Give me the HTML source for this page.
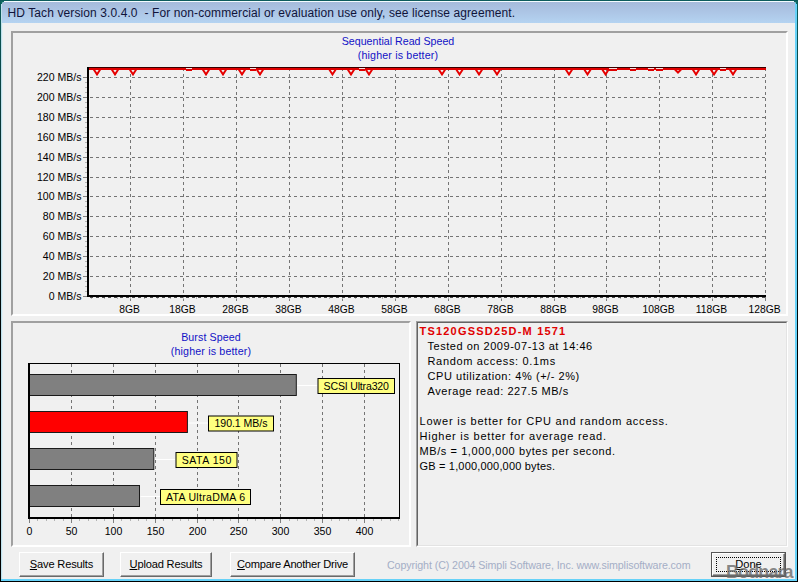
<!DOCTYPE html>
<html lang="en"><head><meta charset="utf-8"><title>HD Tach</title>
<style>
html,body{margin:0;padding:0}
body{width:798px;height:582px;overflow:hidden;position:relative;background:#f0f0f0;font-family:"Liberation Sans",sans-serif;font-size:10.67px;color:#000}
.abs{position:absolute}
#frame{left:0;top:0;width:798px;height:582px;box-sizing:border-box;background:linear-gradient(#0d5c5c,#062a2a 30%,#000 60%)}
#inner{left:1px;top:1px;width:796px;height:580px;background:#66d2f8}
#client{left:1px;top:1px;width:794px;height:578px;background:#f0f0f0;border-left:1px solid #bfe1ec;border-top:1px solid #f4fcff;box-sizing:border-box}
#title{left:2px;top:2px;width:793px;height:21px;background:linear-gradient(#a6bbdb,#adc6e6 50%,#b4d3f1);}
#title span{position:absolute;left:5.5px;top:4px;font-size:12px;letter-spacing:0.1px;color:#10143a;white-space:pre}
.panel{box-sizing:border-box;border:2px solid;border-color:#a0a0a0 #fff #fff #a0a0a0}
svg{position:absolute;left:0;top:0}
svg text.l{font-family:"Liberation Sans",sans-serif;font-size:10.55px;fill:#000}
svg .g{stroke:#747474;stroke-width:1;stroke-dasharray:3 3;fill:none}
svg .t{stroke:#808080;stroke-width:1}
svg .m{stroke:#b4b4b4;stroke-width:1}
.ct{color:#1212c6;text-align:center;font-size:10.67px;line-height:14px;white-space:nowrap}
.btn{box-sizing:border-box;height:25px;background:#f0f0f0;border:1px solid;border-color:#fff #696969 #696969 #fff;box-shadow:inset -1px -1px 0 #a0a0a0;font-size:11.1px;letter-spacing:-0.17px;text-align:center;line-height:22px;white-space:nowrap}
.btn u{text-decoration:underline}
#info2{position:absolute;left:0;top:0;right:0;bottom:0;border:1px solid;border-color:#646464 #e3e3e3 #e3e3e3 #646464}
#info p{margin:0;position:absolute;white-space:pre;font-size:11px;line-height:15px;height:15px}
</style></head><body>
<div id="frame" class="abs"></div>
<div id="inner" class="abs"></div>
<div id="client" class="abs"></div>
<div class="abs" style="left:2px;top:23px;width:1px;height:556px;background:#e2f0f5"></div>
<div id="title" class="abs"><span>HD Tach version 3.0.4.0  - For non-commercial or evaluation use only, see license agreement.</span></div>
<div class="abs" style="left:1px;top:1px;width:3px;height:1px;background:#0f6a62"></div>
<div class="abs" style="left:1px;top:2px;width:1px;height:2px;background:#0f6a62"></div>
<div class="abs" style="left:2px;top:2px;width:1px;height:1px;background:#6aa8a8"></div>
<div class="abs" style="left:794px;top:1px;width:3px;height:1px;background:#0f6a62"></div>
<div class="abs" style="left:796px;top:2px;width:1px;height:2px;background:#0f6a62"></div>
<div class="abs" style="left:795px;top:2px;width:1px;height:1px;background:#6aa8a8"></div>

<div class="abs panel" style="left:11px;top:31px;width:777px;height:285px"></div>
<div class="abs panel" style="left:11px;top:321px;width:400px;height:226px"></div>
<div class="abs" id="info" style="left:416px;top:321px;width:372px;height:226px;box-sizing:border-box;border:1px solid;border-color:#a0a0a0 #fff #fff #a0a0a0">
<div id="info2">
<p style="left:1.5px;top:1px;letter-spacing:1.2px;color:#e00000;font-weight:bold">TS120GSSD25D-M 1571</p>
<p style="left:9.5px;top:16px;letter-spacing:0.53px">Tested on 2009-07-13 at 14:46</p>
<p style="left:9.5px;top:31px;letter-spacing:0.67px">Random access: 0.1ms</p>
<p style="left:9.5px;top:46px;letter-spacing:0.56px">CPU utilization: 4% (+/- 2%)</p>
<p style="left:9.5px;top:61px;letter-spacing:0.57px">Average read: 227.5 MB/s</p>
<p style="left:1.5px;top:91px;letter-spacing:0.78px">Lower is better for CPU and random access.</p>
<p style="left:1.5px;top:106px;letter-spacing:0.76px">Higher is better for average read.</p>
<p style="left:1.5px;top:121px;letter-spacing:0.58px">MB/s = 1,000,000 bytes per second.</p>
<p style="left:1.5px;top:136px;letter-spacing:0.18px">GB = 1,000,000,000 bytes.</p>
</div></div>

<div class="abs ct" style="left:298px;top:34px;width:200px">Sequential Read Speed<br><span style="letter-spacing:.16px">(higher is better)</span></div>
<div class="abs ct" style="left:111px;top:330px;width:200px"><span style="letter-spacing:.1px">Burst Speed</span><br><span style="letter-spacing:.16px">(higher is better)</span></div>

<svg width="798" height="582" viewBox="0 0 798 582">
<line x1="83" y1="296.5" x2="87" y2="296.5" class="t"/>
<text x="81.5" y="300.1" class="l" text-anchor="end">0 MB/s</text>
<line x1="85" y1="291.5" x2="87" y2="291.5" class="m"/>
<line x1="85" y1="286.5" x2="87" y2="286.5" class="m"/>
<line x1="85" y1="281.5" x2="87" y2="281.5" class="m"/>
<line x1="90" y1="276.5" x2="765" y2="276.5" class="g"/>
<line x1="83" y1="276.5" x2="87" y2="276.5" class="t"/>
<text x="81.5" y="280.1" class="l" text-anchor="end">20 MB/s</text>
<line x1="85" y1="271.5" x2="87" y2="271.5" class="m"/>
<line x1="85" y1="266.5" x2="87" y2="266.5" class="m"/>
<line x1="85" y1="261.5" x2="87" y2="261.5" class="m"/>
<line x1="90" y1="256.5" x2="765" y2="256.5" class="g"/>
<line x1="83" y1="256.5" x2="87" y2="256.5" class="t"/>
<text x="81.5" y="260.1" class="l" text-anchor="end">40 MB/s</text>
<line x1="85" y1="251.5" x2="87" y2="251.5" class="m"/>
<line x1="85" y1="246.5" x2="87" y2="246.5" class="m"/>
<line x1="85" y1="241.5" x2="87" y2="241.5" class="m"/>
<line x1="90" y1="236.5" x2="765" y2="236.5" class="g"/>
<line x1="83" y1="236.5" x2="87" y2="236.5" class="t"/>
<text x="81.5" y="240.1" class="l" text-anchor="end">60 MB/s</text>
<line x1="85" y1="231.5" x2="87" y2="231.5" class="m"/>
<line x1="85" y1="226.5" x2="87" y2="226.5" class="m"/>
<line x1="85" y1="221.5" x2="87" y2="221.5" class="m"/>
<line x1="90" y1="216.5" x2="765" y2="216.5" class="g"/>
<line x1="83" y1="216.5" x2="87" y2="216.5" class="t"/>
<text x="81.5" y="220.1" class="l" text-anchor="end">80 MB/s</text>
<line x1="85" y1="211.5" x2="87" y2="211.5" class="m"/>
<line x1="85" y1="206.5" x2="87" y2="206.5" class="m"/>
<line x1="85" y1="201.5" x2="87" y2="201.5" class="m"/>
<line x1="90" y1="196.5" x2="765" y2="196.5" class="g"/>
<line x1="83" y1="196.5" x2="87" y2="196.5" class="t"/>
<text x="81.5" y="200.1" class="l" text-anchor="end">100 MB/s</text>
<line x1="85" y1="191.5" x2="87" y2="191.5" class="m"/>
<line x1="85" y1="186.5" x2="87" y2="186.5" class="m"/>
<line x1="85" y1="182.5" x2="87" y2="182.5" class="m"/>
<line x1="90" y1="177.5" x2="765" y2="177.5" class="g"/>
<line x1="83" y1="177.5" x2="87" y2="177.5" class="t"/>
<text x="81.5" y="181.1" class="l" text-anchor="end">120 MB/s</text>
<line x1="85" y1="172.5" x2="87" y2="172.5" class="m"/>
<line x1="85" y1="167.5" x2="87" y2="167.5" class="m"/>
<line x1="85" y1="162.5" x2="87" y2="162.5" class="m"/>
<line x1="90" y1="157.5" x2="765" y2="157.5" class="g"/>
<line x1="83" y1="157.5" x2="87" y2="157.5" class="t"/>
<text x="81.5" y="161.1" class="l" text-anchor="end">140 MB/s</text>
<line x1="85" y1="152.5" x2="87" y2="152.5" class="m"/>
<line x1="85" y1="147.5" x2="87" y2="147.5" class="m"/>
<line x1="85" y1="142.5" x2="87" y2="142.5" class="m"/>
<line x1="90" y1="137.5" x2="765" y2="137.5" class="g"/>
<line x1="83" y1="137.5" x2="87" y2="137.5" class="t"/>
<text x="81.5" y="141.1" class="l" text-anchor="end">160 MB/s</text>
<line x1="85" y1="132.5" x2="87" y2="132.5" class="m"/>
<line x1="85" y1="127.5" x2="87" y2="127.5" class="m"/>
<line x1="85" y1="122.5" x2="87" y2="122.5" class="m"/>
<line x1="90" y1="117.5" x2="765" y2="117.5" class="g"/>
<line x1="83" y1="117.5" x2="87" y2="117.5" class="t"/>
<text x="81.5" y="121.1" class="l" text-anchor="end">180 MB/s</text>
<line x1="85" y1="112.5" x2="87" y2="112.5" class="m"/>
<line x1="85" y1="107.5" x2="87" y2="107.5" class="m"/>
<line x1="85" y1="102.5" x2="87" y2="102.5" class="m"/>
<line x1="90" y1="97.5" x2="765" y2="97.5" class="g"/>
<line x1="83" y1="97.5" x2="87" y2="97.5" class="t"/>
<text x="81.5" y="101.1" class="l" text-anchor="end">200 MB/s</text>
<line x1="85" y1="92.5" x2="87" y2="92.5" class="m"/>
<line x1="85" y1="87.5" x2="87" y2="87.5" class="m"/>
<line x1="85" y1="82.5" x2="87" y2="82.5" class="m"/>
<line x1="90" y1="77.5" x2="765" y2="77.5" class="g"/>
<line x1="83" y1="77.5" x2="87" y2="77.5" class="t"/>
<text x="81.5" y="81.1" class="l" text-anchor="end">220 MB/s</text>
<line x1="130.5" y1="68" x2="130.5" y2="295" class="g"/>
<line x1="130.5" y1="297" x2="130.5" y2="301" class="t"/>
<text x="129.5" y="312.5" class="l" style="font-size:10.3px" text-anchor="middle">8GB</text>
<line x1="183.5" y1="68" x2="183.5" y2="295" class="g"/>
<line x1="183.5" y1="297" x2="183.5" y2="301" class="t"/>
<text x="182.5" y="312.5" class="l" style="font-size:10.3px" text-anchor="middle">18GB</text>
<line x1="236.5" y1="68" x2="236.5" y2="295" class="g"/>
<line x1="236.5" y1="297" x2="236.5" y2="301" class="t"/>
<text x="235.5" y="312.5" class="l" style="font-size:10.3px" text-anchor="middle">28GB</text>
<line x1="289.5" y1="68" x2="289.5" y2="295" class="g"/>
<line x1="289.5" y1="297" x2="289.5" y2="301" class="t"/>
<text x="288.5" y="312.5" class="l" style="font-size:10.3px" text-anchor="middle">38GB</text>
<line x1="342.5" y1="68" x2="342.5" y2="295" class="g"/>
<line x1="342.5" y1="297" x2="342.5" y2="301" class="t"/>
<text x="341.5" y="312.5" class="l" style="font-size:10.3px" text-anchor="middle">48GB</text>
<line x1="395.5" y1="68" x2="395.5" y2="295" class="g"/>
<line x1="395.5" y1="297" x2="395.5" y2="301" class="t"/>
<text x="394.5" y="312.5" class="l" style="font-size:10.3px" text-anchor="middle">58GB</text>
<line x1="448.5" y1="68" x2="448.5" y2="295" class="g"/>
<line x1="448.5" y1="297" x2="448.5" y2="301" class="t"/>
<text x="447.5" y="312.5" class="l" style="font-size:10.3px" text-anchor="middle">68GB</text>
<line x1="501.5" y1="68" x2="501.5" y2="295" class="g"/>
<line x1="501.5" y1="297" x2="501.5" y2="301" class="t"/>
<text x="500.5" y="312.5" class="l" style="font-size:10.3px" text-anchor="middle">78GB</text>
<line x1="554.5" y1="68" x2="554.5" y2="295" class="g"/>
<line x1="554.5" y1="297" x2="554.5" y2="301" class="t"/>
<text x="553.5" y="312.5" class="l" style="font-size:10.3px" text-anchor="middle">88GB</text>
<line x1="606.5" y1="68" x2="606.5" y2="295" class="g"/>
<line x1="606.5" y1="297" x2="606.5" y2="301" class="t"/>
<text x="605.5" y="312.5" class="l" style="font-size:10.3px" text-anchor="middle">98GB</text>
<line x1="659.5" y1="68" x2="659.5" y2="295" class="g"/>
<line x1="659.5" y1="297" x2="659.5" y2="301" class="t"/>
<text x="658.5" y="312.5" class="l" style="font-size:10.3px" text-anchor="middle">108GB</text>
<line x1="712.5" y1="68" x2="712.5" y2="295" class="g"/>
<line x1="712.5" y1="297" x2="712.5" y2="301" class="t"/>
<text x="711.5" y="312.5" class="l" style="font-size:10.3px" text-anchor="middle">118GB</text>
<line x1="765.5" y1="68" x2="765.5" y2="295" class="g"/>
<line x1="765.5" y1="297" x2="765.5" y2="301" class="t"/>
<text x="764.5" y="312.5" class="l" style="font-size:10.3px" text-anchor="middle">128GB</text>
<line x1="91.5" y1="297" x2="91.5" y2="299" class="m"/>
<line x1="104.5" y1="297" x2="104.5" y2="299" class="m"/>
<line x1="117.5" y1="297" x2="117.5" y2="299" class="m"/>
<line x1="130.5" y1="297" x2="130.5" y2="299" class="m"/>
<line x1="144.5" y1="297" x2="144.5" y2="299" class="m"/>
<line x1="157.5" y1="297" x2="157.5" y2="299" class="m"/>
<line x1="170.5" y1="297" x2="170.5" y2="299" class="m"/>
<line x1="183.5" y1="297" x2="183.5" y2="299" class="m"/>
<line x1="196.5" y1="297" x2="196.5" y2="299" class="m"/>
<line x1="210.5" y1="297" x2="210.5" y2="299" class="m"/>
<line x1="223.5" y1="297" x2="223.5" y2="299" class="m"/>
<line x1="236.5" y1="297" x2="236.5" y2="299" class="m"/>
<line x1="249.5" y1="297" x2="249.5" y2="299" class="m"/>
<line x1="263.5" y1="297" x2="263.5" y2="299" class="m"/>
<line x1="276.5" y1="297" x2="276.5" y2="299" class="m"/>
<line x1="289.5" y1="297" x2="289.5" y2="299" class="m"/>
<line x1="302.5" y1="297" x2="302.5" y2="299" class="m"/>
<line x1="315.5" y1="297" x2="315.5" y2="299" class="m"/>
<line x1="329.5" y1="297" x2="329.5" y2="299" class="m"/>
<line x1="342.5" y1="297" x2="342.5" y2="299" class="m"/>
<line x1="355.5" y1="297" x2="355.5" y2="299" class="m"/>
<line x1="368.5" y1="297" x2="368.5" y2="299" class="m"/>
<line x1="382.5" y1="297" x2="382.5" y2="299" class="m"/>
<line x1="395.5" y1="297" x2="395.5" y2="299" class="m"/>
<line x1="408.5" y1="297" x2="408.5" y2="299" class="m"/>
<line x1="421.5" y1="297" x2="421.5" y2="299" class="m"/>
<line x1="434.5" y1="297" x2="434.5" y2="299" class="m"/>
<line x1="448.5" y1="297" x2="448.5" y2="299" class="m"/>
<line x1="461.5" y1="297" x2="461.5" y2="299" class="m"/>
<line x1="474.5" y1="297" x2="474.5" y2="299" class="m"/>
<line x1="487.5" y1="297" x2="487.5" y2="299" class="m"/>
<line x1="501.5" y1="297" x2="501.5" y2="299" class="m"/>
<line x1="514.5" y1="297" x2="514.5" y2="299" class="m"/>
<line x1="527.5" y1="297" x2="527.5" y2="299" class="m"/>
<line x1="540.5" y1="297" x2="540.5" y2="299" class="m"/>
<line x1="554.5" y1="297" x2="554.5" y2="299" class="m"/>
<line x1="567.5" y1="297" x2="567.5" y2="299" class="m"/>
<line x1="580.5" y1="297" x2="580.5" y2="299" class="m"/>
<line x1="593.5" y1="297" x2="593.5" y2="299" class="m"/>
<line x1="606.5" y1="297" x2="606.5" y2="299" class="m"/>
<line x1="620.5" y1="297" x2="620.5" y2="299" class="m"/>
<line x1="633.5" y1="297" x2="633.5" y2="299" class="m"/>
<line x1="646.5" y1="297" x2="646.5" y2="299" class="m"/>
<line x1="659.5" y1="297" x2="659.5" y2="299" class="m"/>
<line x1="673.5" y1="297" x2="673.5" y2="299" class="m"/>
<line x1="686.5" y1="297" x2="686.5" y2="299" class="m"/>
<line x1="699.5" y1="297" x2="699.5" y2="299" class="m"/>
<line x1="712.5" y1="297" x2="712.5" y2="299" class="m"/>
<line x1="725.5" y1="297" x2="725.5" y2="299" class="m"/>
<line x1="739.5" y1="297" x2="739.5" y2="299" class="m"/>
<line x1="752.5" y1="297" x2="752.5" y2="299" class="m"/>
<line x1="90" y1="297.5" x2="765" y2="297.5" stroke="#4a4a4a" stroke-width="1" stroke-dasharray="3 3"/>
<rect x="87" y="67" width="2" height="230" fill="#000"/>
<rect x="87" y="295" width="679" height="2" fill="#000"/>
<rect x="89" y="67" width="677" height="1" fill="#3a0000"/>
<path d="M93.5 69 L97 74.5 L100.5 69 M111.5 69 L115 74.5 L118.5 69 M129.5 69 L133 74.5 L136.5 69 M202.5 69 L206 74.5 L209.5 69 M219.5 69 L223 74.5 L226.5 69 M238.5 69 L242 74.5 L245.5 69 M256.5 69 L260 74.5 L263.5 69 M329.0 69 L332.5 74.5 L336.0 69 M347.5 69 L351 74.5 L354.5 69 M365.5 69 L369 74.5 L372.5 69 M438.5 69 L442 74.5 L445.5 69 M456.0 69 L459.5 74.5 L463.0 69 M475.5 69 L479 74.5 L482.5 69 M493.5 69 L497 74.5 L500.5 69 M565.5 69 L569 74.5 L572.5 69 M584.0 69 L587.5 74.5 L591.0 69 M602.0 69 L605.5 74.5 L609.0 69 M692.5 69 L696 74.5 L699.5 69 M710.5 69 L714 74.5 L717.5 69 M729.5 69 L733 74.5 L736.5 69 M674.5 69 L678 72.5 L681.5 69 " fill="none" stroke="#e60000" stroke-width="2" stroke-linejoin="miter"/>
<rect x="89" y="68" width="677" height="2" fill="#e00000"/>
<rect x="186" y="68" width="6" height="1" fill="#f6e0e0"/>
<rect x="186" y="70" width="6" height="1" fill="#e00000"/>
<rect x="250" y="68" width="6" height="1" fill="#f6e0e0"/>
<rect x="250" y="70" width="6" height="1" fill="#e00000"/>
<rect x="359" y="68" width="6" height="1" fill="#f6e0e0"/>
<rect x="359" y="70" width="6" height="1" fill="#e00000"/>
<rect x="609" y="68" width="8" height="1" fill="#f6e0e0"/>
<rect x="609" y="70" width="8" height="1" fill="#e00000"/>
<rect x="630" y="68" width="6" height="1" fill="#f6e0e0"/>
<rect x="630" y="70" width="6" height="1" fill="#e00000"/>
<rect x="648" y="68" width="6" height="1" fill="#f6e0e0"/>
<rect x="648" y="70" width="6" height="1" fill="#e00000"/>
<rect x="656" y="68" width="7" height="1" fill="#f6e0e0"/>
<rect x="656" y="70" width="7" height="1" fill="#e00000"/>
<rect x="720" y="68" width="6" height="1" fill="#f6e0e0"/>
<rect x="720" y="70" width="6" height="1" fill="#e00000"/>
<rect x="28" y="363" width="372" height="1" fill="#000"/>
<rect x="399" y="363" width="1" height="156" fill="#000"/>
<line x1="71.5" y1="364" x2="71.5" y2="517" class="g"/>
<line x1="113.5" y1="364" x2="113.5" y2="517" class="g"/>
<line x1="155.5" y1="364" x2="155.5" y2="517" class="g"/>
<line x1="197.5" y1="364" x2="197.5" y2="517" class="g"/>
<line x1="238.5" y1="364" x2="238.5" y2="517" class="g"/>
<line x1="280.5" y1="364" x2="280.5" y2="517" class="g"/>
<line x1="322.5" y1="364" x2="322.5" y2="517" class="g"/>
<line x1="364.5" y1="364" x2="364.5" y2="517" class="g"/>
<line x1="297.3" y1="385.5" x2="317.5" y2="385.5" stroke="#fff" stroke-width="1"/>
<rect x="29.5" y="374.5" width="266.8" height="21" fill="#808080" stroke="#1a1a1a" stroke-width="1"/>
<rect x="318.0" y="378.5" width="76.5" height="15" fill="#ffff80" stroke="#000" stroke-width="1"/>
<text x="356.25" y="389.8" class="l" text-anchor="middle" textLength="65.3" lengthAdjust="spacing">SCSI Ultra320</text>
<line x1="188.4" y1="423.0" x2="208" y2="423.0" stroke="#fff" stroke-width="1"/>
<rect x="29.5" y="411.5" width="157.9" height="21" fill="#ff0000" stroke="#1a1a1a" stroke-width="1"/>
<rect x="208.5" y="416.0" width="65" height="15.0" fill="#ffff80" stroke="#000" stroke-width="1"/>
<text x="241.0" y="427.3" class="l" text-anchor="middle" textLength="53" lengthAdjust="spacing">190.1 MB/s</text>
<line x1="154.8" y1="459.5" x2="175.5" y2="459.5" stroke="#fff" stroke-width="1"/>
<rect x="29.5" y="448.5" width="124.3" height="21" fill="#808080" stroke="#1a1a1a" stroke-width="1"/>
<rect x="176.0" y="452.5" width="61.0" height="15" fill="#ffff80" stroke="#000" stroke-width="1"/>
<text x="206.5" y="463.8" class="l" text-anchor="middle" textLength="49.6" lengthAdjust="spacing">SATA 150</text>
<line x1="140.5" y1="496.5" x2="160" y2="496.5" stroke="#fff" stroke-width="1"/>
<rect x="29.5" y="485.5" width="110.0" height="21" fill="#808080" stroke="#1a1a1a" stroke-width="1"/>
<rect x="160.5" y="489.5" width="90" height="15" fill="#ffff80" stroke="#000" stroke-width="1"/>
<text x="205.5" y="500.8" class="l" text-anchor="middle" textLength="79.2" lengthAdjust="spacing">ATA UltraDMA 6</text>
<rect x="28" y="363" width="2" height="156" fill="#000"/>
<rect x="28" y="517" width="372" height="2" fill="#000"/>
<line x1="29.5" y1="519" x2="29.5" y2="523" class="t"/>
<text x="29.5" y="535" class="l" text-anchor="middle">0</text>
<line x1="37.5" y1="519" x2="37.5" y2="521" class="m"/>
<line x1="46.5" y1="519" x2="46.5" y2="521" class="m"/>
<line x1="54.5" y1="519" x2="54.5" y2="521" class="m"/>
<line x1="63.5" y1="519" x2="63.5" y2="521" class="m"/>
<line x1="71.5" y1="519" x2="71.5" y2="523" class="t"/>
<text x="71.5" y="535" class="l" text-anchor="middle">50</text>
<line x1="79.5" y1="519" x2="79.5" y2="521" class="m"/>
<line x1="88.5" y1="519" x2="88.5" y2="521" class="m"/>
<line x1="96.5" y1="519" x2="96.5" y2="521" class="m"/>
<line x1="104.5" y1="519" x2="104.5" y2="521" class="m"/>
<line x1="113.5" y1="519" x2="113.5" y2="523" class="t"/>
<text x="113.5" y="535" class="l" text-anchor="middle">100</text>
<line x1="121.5" y1="519" x2="121.5" y2="521" class="m"/>
<line x1="130.5" y1="519" x2="130.5" y2="521" class="m"/>
<line x1="138.5" y1="519" x2="138.5" y2="521" class="m"/>
<line x1="146.5" y1="519" x2="146.5" y2="521" class="m"/>
<line x1="155.5" y1="519" x2="155.5" y2="523" class="t"/>
<text x="155.5" y="535" class="l" text-anchor="middle">150</text>
<line x1="163.5" y1="519" x2="163.5" y2="521" class="m"/>
<line x1="172.5" y1="519" x2="172.5" y2="521" class="m"/>
<line x1="180.5" y1="519" x2="180.5" y2="521" class="m"/>
<line x1="188.5" y1="519" x2="188.5" y2="521" class="m"/>
<line x1="197.5" y1="519" x2="197.5" y2="523" class="t"/>
<text x="197.5" y="535" class="l" text-anchor="middle">200</text>
<line x1="205.5" y1="519" x2="205.5" y2="521" class="m"/>
<line x1="213.5" y1="519" x2="213.5" y2="521" class="m"/>
<line x1="222.5" y1="519" x2="222.5" y2="521" class="m"/>
<line x1="230.5" y1="519" x2="230.5" y2="521" class="m"/>
<line x1="238.5" y1="519" x2="238.5" y2="523" class="t"/>
<text x="238.5" y="535" class="l" text-anchor="middle">250</text>
<line x1="247.5" y1="519" x2="247.5" y2="521" class="m"/>
<line x1="255.5" y1="519" x2="255.5" y2="521" class="m"/>
<line x1="264.5" y1="519" x2="264.5" y2="521" class="m"/>
<line x1="272.5" y1="519" x2="272.5" y2="521" class="m"/>
<line x1="280.5" y1="519" x2="280.5" y2="523" class="t"/>
<text x="280.5" y="535" class="l" text-anchor="middle">300</text>
<line x1="289.5" y1="519" x2="289.5" y2="521" class="m"/>
<line x1="297.5" y1="519" x2="297.5" y2="521" class="m"/>
<line x1="306.5" y1="519" x2="306.5" y2="521" class="m"/>
<line x1="314.5" y1="519" x2="314.5" y2="521" class="m"/>
<line x1="322.5" y1="519" x2="322.5" y2="523" class="t"/>
<text x="322.5" y="535" class="l" text-anchor="middle">350</text>
<line x1="331.5" y1="519" x2="331.5" y2="521" class="m"/>
<line x1="339.5" y1="519" x2="339.5" y2="521" class="m"/>
<line x1="348.5" y1="519" x2="348.5" y2="521" class="m"/>
<line x1="356.5" y1="519" x2="356.5" y2="521" class="m"/>
<line x1="364.5" y1="519" x2="364.5" y2="523" class="t"/>
<text x="364.5" y="535" class="l" text-anchor="middle">400</text>
<line x1="373.5" y1="519" x2="373.5" y2="521" class="m"/>
<line x1="381.5" y1="519" x2="381.5" y2="521" class="m"/>
<line x1="390.5" y1="519" x2="390.5" y2="521" class="m"/>
<line x1="398.5" y1="519" x2="398.5" y2="521" class="m"/>
</svg>

<div class="abs btn" style="left:19px;top:552px;width:85px"><u>S</u>ave Results</div>
<div class="abs btn" style="left:120px;top:552px;width:92px"><u>U</u>pload Results</div>
<div class="abs btn" style="left:230px;top:552px;width:125px"><span style="letter-spacing:-.24px"><u>C</u>ompare Another Drive</span></div>
<div class="abs" style="left:387px;top:559px;font-size:10.67px;letter-spacing:-0.09px;color:#a4aec6;white-space:nowrap">Copyright (C) 2004 Simpli Software, Inc. www.simplisoftware.com</div>
<div class="abs" style="left:711px;top:552px;width:75px;height:25px;box-sizing:border-box;border:1px solid #555">
 <div class="btn" style="height:23px;line-height:20px;position:relative"><span style="position:absolute;left:3px;top:3px;right:3px;bottom:3px;border:1px dotted #000"></span><span style="letter-spacing:0"><u>D</u>one</span></div>
</div>
<div class="abs" style="left:726px;top:562px;font-size:18px;line-height:20px;font-weight:bold;color:rgba(105,105,105,.78);letter-spacing:-0.9px;white-space:nowrap">Bodnara</div>
</body></html>
